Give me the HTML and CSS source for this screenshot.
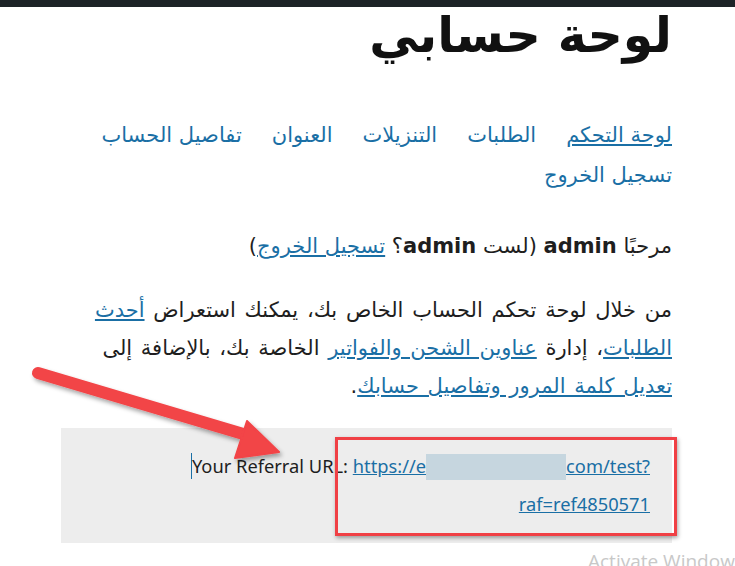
FILE: index.html
```html
<!DOCTYPE html>
<html lang="ar" dir="rtl">
<head>
    <meta charset="UTF-8">
    <meta name="viewport" content="width=device-width, initial-scale=1.0">
    <title>لوحة حسابي</title>
    <link rel="stylesheet" href="styles.css">
</head>
<body>
    <div class="admin-bar"></div>

    <div class="page">
        <h1 class="page-title">لوحة حسابي</h1>

        <nav class="account-nav">
            <a href="#" class="current">لوحة التحكم</a>
            <a href="#">الطلبات</a>
            <a href="#">التنزيلات</a>
            <a href="#">العنوان</a>
            <a href="#">تفاصيل الحساب</a>
            <a href="#">تسجيل الخروج</a>
        </nav>

        <p class="welcome">مرحبًا <strong>admin</strong> (لست <strong>admin</strong>؟ <a href="#">تسجيل الخروج</a>)</p>

        <p class="intro">من خلال لوحة تحكم الحساب الخاص بك، يمكنك استعراض <a href="#">أحدث الطلبات</a>، إدارة <a href="#">عناوين الشحن والفواتير</a> الخاصة بك، بالإضافة إلى <a href="#">تعديل كلمة المرور وتفاصيل حسابك</a>.</p>

        <div class="referral">
            <p dir="ltr"><span class="caret"></span>Your Referral URL: <a href="#">https://e<span class="blur"></span>com/test?raf=ref4850571</a></p>
            <div class="highlight"></div>
        </div>
    </div>

    <svg class="arrow" width="735" height="566" viewBox="0 0 735 566">
        <defs>
            <filter id="shadow" x="-10%" y="-10%" width="120%" height="130%">
                <feDropShadow dx="2" dy="3" stdDeviation="2" flood-color="#000" flood-opacity="0.35"/>
            </filter>
        </defs>
        <g filter="url(#shadow)" fill="#f24447" stroke="#f24447">
            <line x1="38" y1="373" x2="250" y2="436" stroke-width="12" stroke-linecap="round"/>
            <polygon points="247,421 279,452 235,458" stroke-width="2" stroke-linejoin="round"/>
        </g>
    </svg>

    <div class="watermark">Activate Windows</div>
</body>
</html>
```

FILE: styles.css
```css
body {
    margin: 0;
    background: #fff;
    color: #1e1e1e;
    font-family: "DejaVu Sans", sans-serif;
    overflow: hidden;
}
a {
    color: #1a6fa5;
}
.admin-bar {
    height: 7px;
    background: #1d2327;
}
.page {
    margin: 0 63px 0 61px;
}
.page-title {
    margin: 0;
    font-size: 49px;
    line-height: 58px;
    font-weight: bold;
    color: #111;
}
.account-nav {
    margin-top: 50px;
    font-size: 21px;
    line-height: 40px;
    display: flex;
    flex-wrap: wrap;
    column-gap: 30px;
}
.account-nav a {
    text-decoration: none;
}
.account-nav a.current {
    text-decoration: underline;
}
.welcome {
    margin: 32px 0 0;
    font-size: 21px;
    line-height: 38px;
}
.intro {
    margin: 26px 0 0;
    font-size: 21px;
    line-height: 38px;
    word-spacing: 2px;
}
.referral {
    position: relative;
    margin-top: 23px;
    height: 115px;
    background: #ededed;
    padding: 19px 22px 0;
    box-sizing: border-box;
}
.referral p {
    margin: 0;
    text-align: right;
    font-family: "Noto Sans", sans-serif;
    font-size: 18.3px;
    line-height: 38px;
}
.caret {
    display: inline-block;
    width: 1px;
    height: 26px;
    background: #1a6fa5;
    vertical-align: -6px;
}
.blur {
    display: inline-block;
    width: 140px;
    height: 26px;
    background: #c6d6df;
    vertical-align: -7px;
}
.highlight {
    position: absolute;
    left: 274px;
    right: -5px;
    top: 9px;
    bottom: 7px;
    border: 3px solid #f04045;
    box-shadow: 1px 2px 4px rgba(0, 0, 0, 0.35);
}
.arrow {
    position: absolute;
    left: 0;
    top: 0;
    pointer-events: none;
}
.watermark {
    position: absolute;
    left: 588px;
    top: 548px;
    font-family: "Open Sans", sans-serif;
    font-size: 19px;
    color: #c8c8c8;
    white-space: nowrap;
}
```
